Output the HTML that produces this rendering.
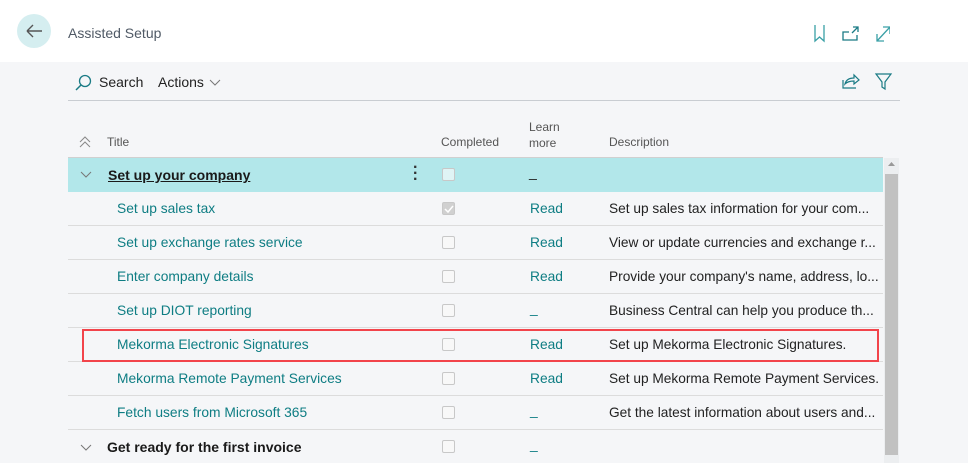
<!DOCTYPE html><html><head><style>
*{margin:0;padding:0;box-sizing:border-box}
body{width:968px;height:463px;overflow:hidden;background:#f5f6f8;font-family:"Liberation Sans",sans-serif;position:relative}
.a{position:absolute;white-space:nowrap}
.top{left:0;top:0;width:968px;height:62px;background:#fff}
.lnk{color:#0e7d83;font-size:13.8px}
.desc{color:#222;font-size:13.7px}
.cb{position:absolute;width:13px;height:13px;border:1px solid #c8c8c8;border-radius:2px;background:#f8f8f8}
.line{position:absolute;height:1px;background:#dcdcdc;left:68px;width:815px}
.hd{font-size:12px;color:#555}
</style></head><body>
<div class="a top"></div>
<div class="a" style="left:17px;top:14px;width:34px;height:34px;border-radius:50%;background:#d5eef0"></div>
<svg class="a" style="left:23px;top:21px" width="22" height="20"><path d="M4 10H19M4 10L10 4M4 10L10 16" stroke="#555" stroke-width="1.4" fill="none"/></svg>
<div class="a" style="left:68px;top:25px;font-size:14px;color:#505a66">Assisted Setup</div>
<svg class="a" style="left:810px;top:22px" width="80" height="22"><path d="M5 3V19L9.5 15L14 19V3" stroke="#3aa0a6" stroke-width="1.3" fill="none"/><path d="M39 10H33V18H47V13M43 5H48V10M48 5L42 11" stroke="#1a7b85" stroke-width="1.3" fill="none"/><path d="M67 19L80 5M73 5H80V12M67 12V19H74" stroke="#3aa0a6" stroke-width="1.3" fill="none"/></svg>
<svg class="a" style="left:74px;top:73px" width="20" height="20"><circle cx="11" cy="8" r="5.5" stroke="#1a7b85" stroke-width="1.3" fill="none"/><path d="M7 12L2 17" stroke="#1a7b85" stroke-width="1.5"/></svg>
<div class="a" style="left:99px;top:74px;font-size:14px;color:#222">Search</div>
<div class="a" style="left:158px;top:74px;font-size:14px;color:#222">Actions</div>
<svg class="a" style="left:208px;top:77px" width="14" height="10"><path d="M2 3L7 8L12 3" stroke="#777" stroke-width="1" fill="none"/></svg>
<svg class="a" style="left:840px;top:71px" width="54" height="20"><path d="M3 9V17H16M5 13C6 9 9 7 14 7V4L19 9L14 13V10C10 10 7 11 5 13Z" stroke="#1a7b85" stroke-width="1.2" fill="none"/><path d="M36 3H51L45 11V18L42 16V11Z" stroke="#1a7b85" stroke-width="1.2" fill="none"/></svg>
<div class="a" style="left:68px;top:100px;width:832px;height:1px;background:#c9cdd2"></div>
<svg class="a" style="left:78px;top:135px" width="14" height="14"><path d="M2 7L7 2L12 7M2 12L7 7L12 12" stroke="#888" stroke-width="1" fill="none"/></svg>
<div class="a hd" style="left:107px;top:135px">Title</div>
<div class="a hd" style="left:441px;top:135px">Completed</div>
<div class="a hd" style="left:529px;top:119px;line-height:16px">Learn<br>more</div>
<div class="a hd" style="left:609px;top:135px">Description</div>
<div class="a" style="left:68px;top:157px;width:815px;height:1px;background:#d0d0d0"></div>
<div class="a" style="left:68px;top:158px;width:815px;height:34px;background:#b2e7ea"></div>
<svg class="a" style="left:79px;top:169px" width="14" height="10"><path d="M2 3L7 8L12 3" stroke="#777" stroke-width="1" fill="none"/></svg>
<div class="a" style="left:108px;top:167px;font-size:14px;font-weight:bold;color:#1a1a1a;text-decoration:underline">Set up your company</div>
<div class="a" style="left:413px;top:165px;font-size:16px;font-weight:bold;color:#333;line-height:6px">·<br>·<br>·</div>
<div class="cb" style="left:442px;top:168px;background:#e0f4f5"></div>
<div class="a" style="left:529px;top:164px;color:#222;font-size:14px">_</div>
<div class="a" style="left:884px;top:158px;width:15px;height:305px;background:#eceef0"></div>
<svg class="a" style="left:886px;top:160px" width="11" height="8"><path d="M2 6L5.5 2L9 6Z" fill="#999"/></svg>
<div class="a" style="left:885px;top:174px;width:13px;height:281px;background:#c1c1c1"></div>

<div class="line" style="top:225px"></div><div class="line" style="top:259px"></div><div class="line" style="top:293px"></div><div class="line" style="top:327px"></div><div class="line" style="top:361px"></div><div class="line" style="top:395px"></div><div class="line" style="top:429px"></div>

<div class="a lnk" style="left:117px;top:201px">Set up sales tax</div>
<div class="a lnk" style="left:117px;top:235px">Set up exchange rates service</div>
<div class="a lnk" style="left:117px;top:269px">Enter company details</div>
<div class="a lnk" style="left:117px;top:303px">Set up DIOT reporting</div>
<div class="a lnk" style="left:117px;top:337px">Mekorma Electronic Signatures</div>
<div class="a lnk" style="left:117px;top:371px">Mekorma Remote Payment Services</div>
<div class="a lnk" style="left:117px;top:405px">Fetch users from Microsoft 365</div>
<svg class="a" style="left:79px;top:442px" width="14" height="10"><path d="M2 3L7 8L12 3" stroke="#777" stroke-width="1" fill="none"/></svg>
<div class="a" style="left:107px;top:439px;font-size:14px;font-weight:bold;color:#1a1a1a">Get ready for the first invoice</div>

<div class="cb" style="left:442px;top:202px;background:#d0d0d0;border-color:#c8c8c8"></div>
<svg class="a" style="left:443px;top:203px" width="12" height="12"><path d="M2 6L5 9L10 3" stroke="#fff" stroke-width="1.5" fill="none"/></svg>
<div class="cb" style="left:442px;top:236px"></div><div class="cb" style="left:442px;top:270px"></div><div class="cb" style="left:442px;top:304px"></div><div class="cb" style="left:442px;top:338px"></div><div class="cb" style="left:442px;top:372px"></div><div class="cb" style="left:442px;top:406px"></div><div class="cb" style="left:442px;top:440px"></div>

<div class="a lnk" style="left:530px;top:201px">Read</div>
<div class="a lnk" style="left:530px;top:235px">Read</div>
<div class="a lnk" style="left:530px;top:269px">Read</div>
<div class="a lnk" style="left:530px;top:301px">_</div>
<div class="a lnk" style="left:530px;top:337px">Read</div>
<div class="a lnk" style="left:530px;top:371px">Read</div>
<div class="a lnk" style="left:530px;top:403px">_</div>
<div class="a lnk" style="left:530px;top:437px">_</div>

<div class="a desc" style="left:609px;top:201px">Set up sales tax information for your com...</div>
<div class="a desc" style="left:609px;top:235px">View or update currencies and exchange r...</div>
<div class="a desc" style="left:609px;top:269px">Provide your company's name, address, lo...</div>
<div class="a desc" style="left:609px;top:303px">Business Central can help you produce th...</div>
<div class="a desc" style="left:609px;top:337px">Set up Mekorma Electronic Signatures.</div>
<div class="a desc" style="left:609px;top:371px">Set up Mekorma Remote Payment Services.</div>
<div class="a desc" style="left:609px;top:405px">Get the latest information about users and...</div>

<div class="a" style="left:82px;top:329px;width:797px;height:33px;border:2.5px solid #f2444b"></div>
</body></html>
